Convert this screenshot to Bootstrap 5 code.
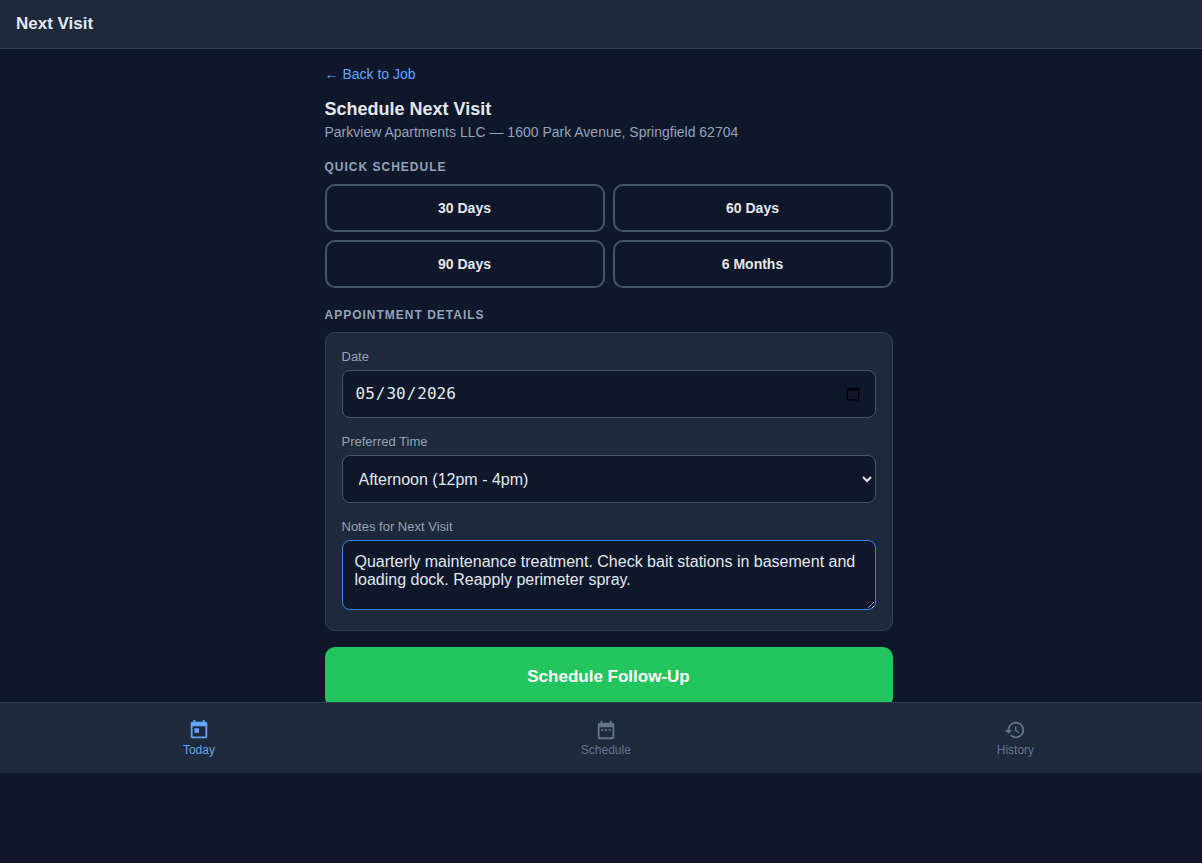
<!DOCTYPE html>
<html lang="en">
<head>
<meta charset="utf-8">
<meta name="viewport" content="width=device-width, initial-scale=1">
<title>Next Visit</title>
<link href="https://cdn.jsdelivr.net/npm/bootstrap@5.3.0/dist/css/bootstrap.min.css" rel="stylesheet">
<style>
  body { font-family: "Liberation Sans", Arial, sans-serif; background: #0f172a; color: #e2e8f0; font-size: 14px; overflow-x: hidden; }
  .app-shell { height: calc(100vh - 90px); margin-right: -15px; }
  .app-header { background: #1e293b; border-bottom: 1px solid #334155; padding: 12px 16px; }
  .app-header h1 { font-size: 17px; line-height: 24px; font-weight: 700; }
  .app-main { overflow-y: auto; min-height: 0; scrollbar-width: none; }
  .app-main::-webkit-scrollbar { display: none; }
  .app-content { max-width: 600px; padding: 16px; }
  .back-link { color: #60a5fa; line-height: 18px; margin-bottom: 12px; }
  .visit-title { font-size: 18px; line-height: 28px; font-weight: 700; }
  .visit-sub { color: #94a3b8; line-height: 18px; margin-bottom: 17px; }
  .section-label { font-size: 12px; line-height: 18px; font-weight: 700; letter-spacing: 1px; color: #94a3b8; text-transform: uppercase; margin-bottom: 8px; }
  .quick-grid { display: grid; grid-template-columns: 1fr 1fr; gap: 8px; margin-bottom: 18px; }
  .btn-quick { --bs-btn-color: #e2e8f0; --bs-btn-border-color: #475569; --bs-btn-hover-color: #fff; --bs-btn-hover-border-color: #3b82f6; border-width: 2px; border-radius: 10px; font-size: 14px; font-weight: 700; height: 48px; }
  .details-card { background: #1e293b; border: 1px solid #334155; border-radius: 10px; color: inherit; margin-bottom: 16px; }
  .details-card .card-body { padding: 16px 16px 20px; }
  .details-card .form-label { display: block; font-size: 13px; line-height: 15px; color: #94a3b8; margin-bottom: 6px; }
  .details-card .form-control { background: #0f172a; color: #e2e8f0; border: 1px solid #475569; border-radius: 8px; font-size: 16px; line-height: 18px; padding: 12px; height: 48px; box-shadow: none; }
  .details-card input.form-control { font-family: "DejaVu Sans Mono", monospace; line-height: 22px; }
  .details-card .form-control::-webkit-datetime-edit { line-height: 22px; }
  .details-card .form-control::-webkit-datetime-edit-month-field,
  .details-card .form-control::-webkit-datetime-edit-day-field,
  .details-card .form-control::-webkit-datetime-edit-year-field { padding: 1px; }
  .details-card select.form-control { appearance: auto; padding: 0 0 0 12px; }
  .details-card textarea.form-control { height: 70px; border-color: #3b82f6; resize: vertical; }
  .btn-submit { --bs-btn-color: #fff; --bs-btn-bg: #22c55e; --bs-btn-hover-color: #fff; --bs-btn-hover-bg: #16a34a; border: 0; border-radius: 10px; font-size: 17px; font-weight: 700; height: 60px; }
  .tab-bar { background: #1e293b; border-top: 1px solid #334155; height: 71px; flex: none; }
  .tab-item { color: #64748b; font-size: 12px; line-height: 14px; gap: 2px; }
  .tab-item.active { color: #60a5fa; }
  .tab-item svg { width: 22px; height: 22px; fill: currentColor; }
</style>
</head>
<body>
<div class="app-shell d-flex flex-column">
  <header class="app-header"><h1 class="m-0">Next Visit</h1></header>
  <main class="app-main flex-grow-1">
    <div class="app-content mx-auto">
      <a href="#" class="back-link d-table text-decoration-none">← Back to Job</a>
      <h2 class="visit-title mb-0">Schedule Next Visit</h2>
      <p class="visit-sub">Parkview Apartments LLC — 1600 Park Avenue, Springfield 62704</p>

      <h3 class="section-label">Quick Schedule</h3>
      <div class="quick-grid">
        <button type="button" class="btn btn-quick">30 Days</button>
        <button type="button" class="btn btn-quick">60 Days</button>
        <button type="button" class="btn btn-quick">90 Days</button>
        <button type="button" class="btn btn-quick">6 Months</button>
      </div>

      <form>
        <h3 class="section-label">Appointment Details</h3>
        <div class="card details-card">
          <div class="card-body d-flex flex-column gap-3">
            <div>
              <label class="form-label" for="date">Date</label>
              <input class="form-control" type="date" id="date" value="2026-05-30">
            </div>
            <div>
              <label class="form-label" for="time">Preferred Time</label>
              <select class="form-control" id="time">
                <option>Morning (8am - 12pm)</option>
                <option selected>Afternoon (12pm - 4pm)</option>
              </select>
            </div>
            <div>
              <label class="form-label" for="notes">Notes for Next Visit</label>
              <textarea class="form-control" id="notes" rows="2">Quarterly maintenance treatment. Check bait stations in basement and loading dock. Reapply perimeter spray.</textarea>
            </div>
          </div>
        </div>
        <button type="submit" class="btn btn-submit w-100">Schedule Follow-Up</button>
      </form>
    </div>
  </main>
  <nav class="tab-bar d-flex justify-content-around align-items-center">
    <a href="#" class="tab-item active d-flex flex-column align-items-center text-decoration-none">
      <svg viewBox="0 0 24 24" aria-hidden="true"><path d="M19 3h-1V1h-2v2H8V1H6v2H5c-1.11 0-1.99.9-1.99 2L3 19c0 1.1.89 2 2 2h14c1.1 0 2-.9 2-2V5c0-1.1-.9-2-2-2zm0 16H5V8h14v11zM7 10h5v5H7z"/></svg>
      <span>Today</span>
    </a>
    <a href="#" class="tab-item d-flex flex-column align-items-center text-decoration-none">
      <svg viewBox="0 0 24 24" aria-hidden="true"><path d="M9 11H7v2h2v-2zm4 0h-2v2h2v-2zm4 0h-2v2h2v-2zm2-7h-1V2h-2v2H8V2H6v2H5c-1.11 0-1.99.9-1.99 2L3 20c0 1.1.89 2 2 2h14c1.1 0 2-.9 2-2V6c0-1.1-.9-2-2-2zm0 16H5V9h14v11z"/></svg>
      <span>Schedule</span>
    </a>
    <a href="#" class="tab-item d-flex flex-column align-items-center text-decoration-none">
      <svg viewBox="0 0 24 24" aria-hidden="true"><path d="M13 3c-4.97 0-9 4.03-9 9H1l3.89 3.89.07.14L9 12H6c0-3.87 3.13-7 7-7s7 3.13 7 7-3.13 7-7 7c-1.93 0-3.68-.79-4.94-2.06l-1.42 1.42C8.27 19.99 10.51 21 13 21c4.97 0 9-4.03 9-9s-4.03-9-9-9zm-1 5v5l4.28 2.54.72-1.21-3.5-2.08V8H12z"/></svg>
      <span>History</span>
    </a>
  </nav>
</div>
<script src="https://cdn.jsdelivr.net/npm/bootstrap@5.3.0/dist/js/bootstrap.bundle.min.js"></script>
</body>
</html>
